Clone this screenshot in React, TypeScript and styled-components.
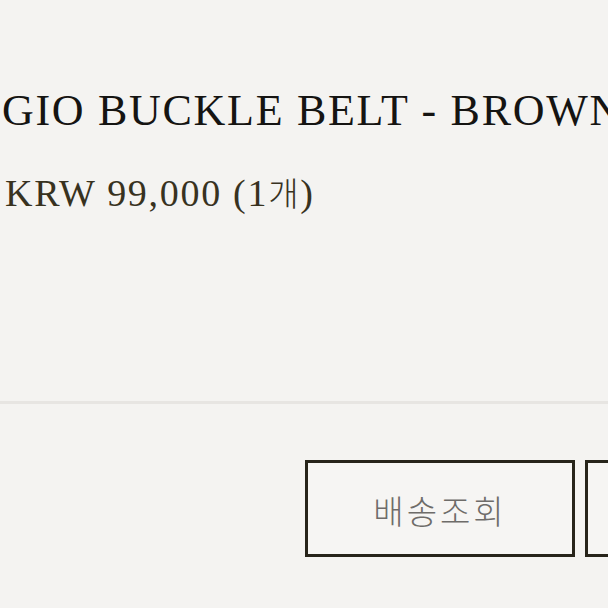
import React from "react";
import styled, { createGlobalStyle } from "styled-components";

const Global = createGlobalStyle`
  html, body { margin: 0; padding: 0; background: #f4f3f1; }
  body { font-family: "Liberation Serif", serif; }
`;

const Page = styled.div`
  width: 608px;
  height: 608px;
  overflow: hidden;
  background: #f4f3f1;
  display: flex;
  flex-direction: column;
`;

const Info = styled.section`
  display: flex;
  flex-direction: column;
  padding: 86px 0 0 2px;
  height: 401px;
  box-sizing: border-box;
  flex: none;
`;

const Title = styled.h1`
  margin: 0;
  font-family: "Liberation Serif", serif;
  font-weight: 400;
  font-size: 44px;
  line-height: 50px;
  letter-spacing: 1.7px;
  color: #151412;
  white-space: nowrap;
`;

const Price = styled.p`
  margin: 34px 0 0 3px;
  font-family: "Liberation Serif", "Noto Sans CJK KR", serif;
  font-size: 38px;
  line-height: 44px;
  letter-spacing: 1.7px;
  color: #38321f;
  white-space: nowrap;
`;

const Korean = styled.span`
  font-family: "Noto Sans CJK KR", sans-serif;
  font-weight: 300;
  font-size: 33px;
`;

const Divider = styled.hr`
  margin: 0;
  border: 0;
  height: 3px;
  background: #e7e5e2;
  flex: none;
`;

const Actions = styled.div`
  display: flex;
  justify-content: flex-end;
  gap: 10px;
  margin: 56px -247px 0 0;
`;

const ActionButton = styled.button`
  width: 270px;
  height: 97px;
  box-sizing: border-box;
  border: 3px solid #27241a;
  background: #f6f5f3;
  color: #6e6c69;
  font-family: "Noto Sans CJK KR", sans-serif;
  font-weight: 300;
  font-size: 33px;
  letter-spacing: 3px;
  padding: 2px 0 0 0;
  display: flex;
  align-items: center;
  justify-content: center;
  flex: none;
`;

export default function App() {
  return (
    <Page>
      <Global />
      <Info>
        <Title>GIO BUCKLE BELT - BROWN</Title>
        <Price>
          KRW 99,000 (1<Korean>개</Korean>)
        </Price>
      </Info>
      <Divider />
      <Actions>
        <ActionButton>배송조회</ActionButton>
        <ActionButton>구매확정</ActionButton>
      </Actions>
    </Page>
  );
}
